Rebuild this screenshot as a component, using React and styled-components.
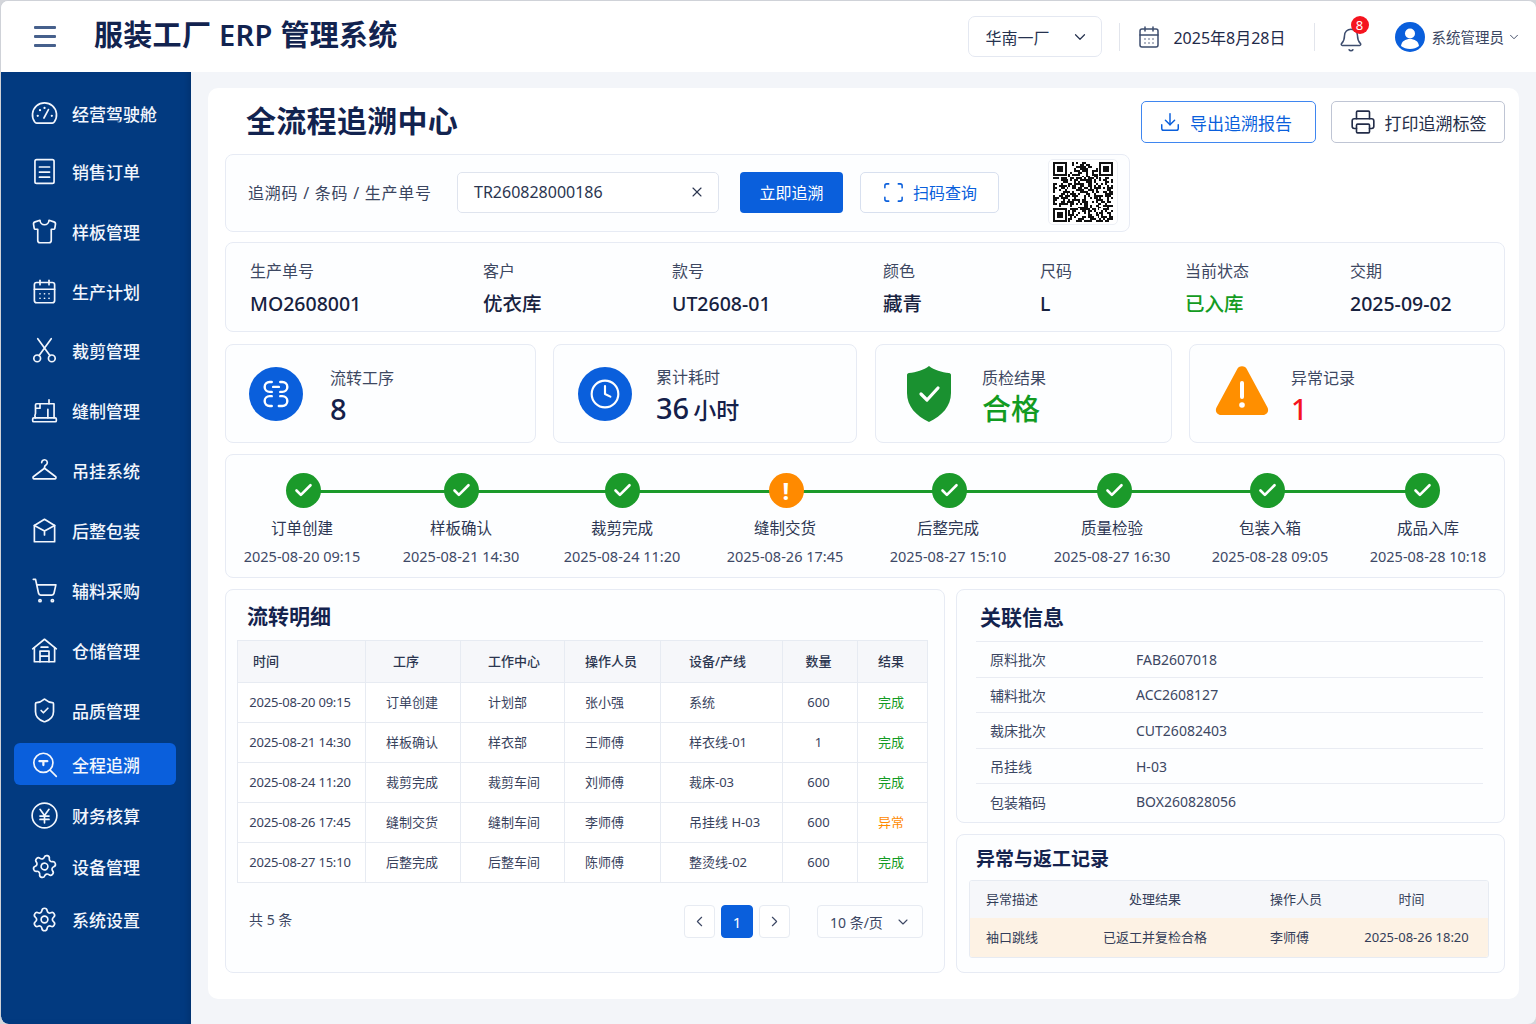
import React from 'react';
import styled, { createGlobalStyle } from 'styled-components';
import {
  Bell, CalendarDays, Check, ChevronDown, ChevronLeft, ChevronRight, Clock, Download,
  Printer, Scan, Settings, ShieldCheck, Shirt, ShoppingCart, X,
} from 'lucide-react';

const GlobalStyle = createGlobalStyle`
  html, body { margin: 0; padding: 0; background: #d4d6db; }
  * { box-sizing: border-box; }
  body { font-family: "Noto Sans", "Noto Sans CJK SC", sans-serif; color: #1c2747; }
`;

const Shell = styled.div`
  width: 1536px;
  height: 1024px;
  display: flex;
  flex-direction: column;
  overflow: hidden;
  border-radius: 8px;
  border: 1px solid #cfd2d8;
  border-bottom: 0;
  border-right: 0;
  background: #f3f5f9;
`;

const TopBar = styled.header`
  height: 71px;
  flex: none;
  display: flex;
  align-items: center;
  background: #fff;
  padding: 0 15px 0 33px;
`;

const Burger = styled.div`
  width: 22px;
  display: flex;
  flex-direction: column;
  gap: 6px;
  span { height: 3px; border-radius: 1px; background: #46608c; }
`;

const AppTitle = styled.h1`
  margin: 0 0 4px 38px;
  font-size: 29px;
  line-height: 40px;
  font-weight: 600;
  letter-spacing: 0.3px;
  color: #12234f;
  white-space: nowrap;
`;

const TopRight = styled.div`
  margin-left: auto;
  display: flex;
  align-items: center;
`;

const FactorySelect = styled.div`
  width: 134px;
  height: 41px;
  display: flex;
  align-items: center;
  justify-content: space-between;
  padding: 0 12px 0 16px;
  border: 1px solid #e4e8f1;
  border-radius: 7px;
  font-size: 16px;
  color: #26324f;
`;

const Divider = styled.div`
  width: 1px;
  height: 28px;
  background: #e2e5ec;
  margin: ${(p) => p.$margin};
`;

const DateText = styled.span`
  margin-left: 12px;
  font-size: 16px;
  color: #1f2a49;
  white-space: nowrap;
`;

const BellWrap = styled.div`
  position: relative;
  width: 26px;
  height: 28px;
  margin: 9px 31px 0 23px;
  color: #3d4d6e;
`;

const Badge = styled.span`
  position: absolute;
  top: -11px;
  right: -5px;
  width: 18px;
  height: 18px;
  border-radius: 50%;
  background: #f5141f;
  color: #fff;
  font-size: 13px;
  line-height: 18px;
  text-align: center;
`;

const UserName = styled.span`
  margin: 0 3px 0 7px;
  font-size: 14.5px;
  color: #3c4763;
  white-space: nowrap;
`;

const Body = styled.div`
  flex: 1;
  display: flex;
  min-height: 0;
`;

const Sidebar = styled.nav`
  width: 190px;
  flex: none;
  padding: 20px 15px 0 13px;
  background: #023a80;
  box-shadow: inset -6px 0 10px -6px #012c63;
  border-bottom-left-radius: 8px;
`;

const NavItem = styled.div`
  height: 42px;
  margin-top: ${(p) => p.$gap}px;
  padding-left: 17px;
  display: flex;
  align-items: center;
  gap: 14px;
  border-radius: 6px;
  font-size: 17px;
  font-weight: 500;
  color: #f2f6fd;
  background: ${(p) => (p.$active ? '#0a5fdc' : 'transparent')};
  svg { flex: none; }
`;

const DeviceCog = styled(Settings)`
  transform: rotate(15deg);
`;

const Main = styled.main`
  flex: 1;
  padding: 16px 17px 24px 17px;
`;

const Panel = styled.div`
  width: 1311px;
  height: 911px;
  padding: 13px 14px 0 17px;
  background: #fff;
  border-radius: 10px;
  display: flex;
  flex-direction: column;
`;

const TitleRow = styled.div`
  height: 42px;
  display: flex;
  align-items: center;
  gap: 15px;
  margin-bottom: 11px;
`;

const PageTitle = styled.h2`
  margin: 0 auto 6px 21px;
  font-size: 30px;
  font-weight: 700;
  letter-spacing: 0.3px;
  color: #12234f;
`;

const OutlineButton = styled.button`
  height: ${(p) => p.$h || 42}px;
  width: ${(p) => p.$w}px;
  display: flex;
  align-items: center;
  justify-content: center;
  gap: ${(p) => p.$g || 9}px;
  padding: 0 ${(p) => p.$pr || 0}px 0 0;
  background: #fff;
  border: 1px solid ${(p) => p.$border};
  border-radius: 5px;
  color: ${(p) => p.$color};
  font: inherit;
  font-size: ${(p) => p.$size || 17}px;
`;

const Card = styled.section`
  background: #fdfeff;
  border: 1px solid #e7ebf4;
  border-radius: 8px;
`;

const SearchCard = styled(Card)`
  width: 905px;
  height: 78px;
  display: flex;
  align-items: center;
  padding: 0 11px 2px 22px;
  margin-bottom: 10px;
`;

const SearchLabel = styled.span`
  width: 209px;
  font-size: 16px;
  letter-spacing: 0.75px;
  color: #3a4560;
  white-space: pre;
`;

const SearchInput = styled.div`
  width: 262px;
  height: 41px;
  display: flex;
  align-items: center;
  justify-content: space-between;
  padding: 0 13px 0 16px;
  background: #fff;
  border: 1px solid #dfe4ee;
  border-radius: 5px;
  font-size: 16px;
  color: #2b3550;
`;

const PrimaryButton = styled.button`
  width: 103px;
  height: 41px;
  margin: 0 17px 0 21px;
  border: 0;
  border-radius: 4px;
  background: #0a5fdc;
  color: #fff;
  font: inherit;
  font-size: 16px;
`;

const QrBox = styled.div`
  width: 70px;
  height: 66px;
  margin-left: auto;
  display: flex;
  align-items: center;
  justify-content: center;
  background: #fff;
  border: 1px solid #eceff5;
  border-radius: 5px;
`;

const InfoCard = styled(Card)`
  height: 90px;
  display: grid;
  grid-template-columns: 233px 189px 211px 157px 145px 165px 1fr;
  align-items: center;
  padding: 3px 0 0 24px;
  margin-bottom: 12px;
`;

const InfoLabel = styled.div`
  font-size: 16px;
  line-height: 22px;
  color: #3d4862;
  margin-bottom: 8px;
`;

const InfoValue = styled.div`
  font-size: 19.5px;
  line-height: 28px;
  font-weight: 500;
  color: ${(p) => p.$color || '#17223f'};
`;

const StatRow = styled.div`
  display: flex;
  margin-bottom: 11px;
`;

const StatCard = styled(Card)`
  width: ${(p) => p.$w}px;
  height: 99px;
  margin-left: ${(p) => p.$gap}px;
  padding-left: ${(p) => p.$pad}px;
  display: flex;
  align-items: center;
  gap: ${(p) => p.$between}px;
`;

const RoundIcon = styled.div`
  width: 54px;
  height: 54px;
  border-radius: 50%;
  background: #0a5fdc;
  color: #fff;
  display: flex;
  align-items: center;
  justify-content: center;
`;

const StatText = styled.div`
  padding-top: 8px;
`;

const StatLabel = styled.div`
  font-size: 16px;
  line-height: 22px;
  color: #3d4862;
`;

const StatValue = styled.div`
  margin-top: 1px;
  font-size: 29px;
  line-height: 38px;
  font-weight: 500;
  color: ${(p) => p.$color || '#14204a'};
`;

const StatUnit = styled.span`
  margin-left: 4px;
  font-size: 23px;
`;

const WarnSvg = styled.svg`
  margin-bottom: 5px;
`;

const TimelineCard = styled(Card)`
  height: 124px;
  padding: 18px 0 0 16px;
  margin-bottom: 11px;
`;

const Track = styled.div`
  position: relative;
  display: flex;
`;

const TrackLine = styled.div`
  position: absolute;
  top: 17px;
  left: 62px;
  width: 1119px;
  height: 3px;
  background: #1b9a2a;
`;

const Step = styled.div`
  position: relative;
  width: 120px;
  margin-left: ${(p) => p.$gap}px;
  display: flex;
  flex-direction: column;
  align-items: center;
  white-space: nowrap;
`;

const StepDot = styled.div`
  width: 35px;
  height: 35px;
  margin-left: ${(p) => p.$nudge * 2}px;
  border-radius: 50%;
  background: ${(p) => p.$color};
  color: #fff;
  display: flex;
  align-items: center;
  justify-content: center;
  font-size: 24px;
  font-weight: 700;
`;

const StepName = styled.div`
  margin-top: 9px;
  font-size: 15.5px;
  line-height: 22px;
  color: #2d3753;
`;

const StepTime = styled.div`
  margin-top: 7px;
  font-size: 14.5px;
  line-height: 20px;
  color: #3e4966;
`;

const Columns = styled.div`
  display: flex;
  gap: 11px;
`;

const FlowCard = styled(Card)`
  width: 720px;
  height: 384px;
  padding: 0 11px;
`;

const SectionTitle = styled.h3`
  margin: 0;
  padding-left: ${(p) => p.$pad}px;
  height: ${(p) => p.$h}px;
  display: flex;
  align-items: center;
  font-size: ${(p) => p.$size || 21}px;
  font-weight: 700;
  color: #14234e;
`;

const FlowTable = styled.table`
  width: 690px;
  border-collapse: collapse;
  table-layout: fixed;
  font-size: 13px;
  color: #38425d;
  th, td {
    border: 1px solid #e7ebf2;
    padding: 0;
    white-space: nowrap;
  }
  th { height: 42px; background: #f6f7fa; font-weight: 500; color: #2c3650; }
  td { height: 40px; background: #fff; }
  td:first-child div { letter-spacing: -0.2px; }
`;

const Cell = styled.div`
  text-align: ${(p) => (p.$pad ? 'left' : 'center')};
  padding: 0 ${(p) => p.$right || 0}px 2px ${(p) => p.$pad || 0}px;
  color: ${(p) => p.$color || 'inherit'};
`;

const Pager = styled.div`
  margin-top: 22px;
  display: flex;
  align-items: center;
  gap: 6px;
  padding-right: 10px;
`;

const Total = styled.span`
  margin: -6px auto 0 12px;
  font-size: 14px;
  color: #3c4763;
`;

const PageBtn = styled.div`
  width: ${(p) => (p.$active ? 32 : 31)}px;
  height: 33px;
  display: flex;
  align-items: center;
  justify-content: center;
  border-radius: 4px;
  border: 1px solid ${(p) => (p.$active ? '#0a5fdc' : '#e7ebf2')};
  background: ${(p) => (p.$active ? '#0a5fdc' : '#fff')};
  color: ${(p) => (p.$active ? '#fff' : '#3c4763')};
  font-size: 15px;
`;

const PageSize = styled.div`
  width: 106px;
  height: 33px;
  margin-left: 21px;
  display: flex;
  align-items: center;
  justify-content: space-between;
  padding: 0 11px 0 12px;
  border: 1px solid #e7ebf2;
  border-radius: 4px;
  font-size: 14px;
  color: #3c4763;
`;

const RightCol = styled.div`
  width: 549px;
  display: flex;
  flex-direction: column;
  gap: 11px;
`;

const LinkCard = styled(Card)`
  height: 234px;
  padding: 0 21px 0 19px;
`;

const LinkRow = styled.div`
  height: 35.6px;
  display: grid;
  grid-template-columns: 146px 1fr;
  align-items: center;
  padding-left: 14px;
  border-top: 1px solid #e9ecf3;
  font-size: 14px;
  color: #3c4763;
`;

const IssueCard = styled(Card)`
  height: 139px;
  padding: 0 15px 0 12px;
`;

const IssueGrid = styled.div`
  border: 1px solid #e7ebf2;
  border-radius: 3px;
  overflow: hidden;
`;

const IssueRow = styled.div`
  display: grid;
  grid-template-columns: 110px 150px 115px 1fr;
  align-items: center;
  height: ${(p) => p.$h}px;
  font-size: 13px;
  white-space: nowrap;
  color: #333d58;
  background: ${(p) => p.$bg};
`;

const navItems = [
  ['经营驾驶舱', 'gauge', 0],
  ['销售订单', 'order', 16],
  ['样板管理', 'shirt', 18],
  ['生产计划', 'calendar', 18],
  ['裁剪管理', 'scissors', 17],
  ['缝制管理', 'sewing', 18],
  ['吊挂系统', 'hanger', 18],
  ['后整包装', 'box', 18],
  ['辅料采购', 'cart', 18],
  ['仓储管理', 'house', 18],
  ['品质管理', 'shield', 18],
  ['全程追溯', 'trace', 12],
  ['财务核算', 'yen', 9],
  ['设备管理', 'device', 9],
  ['系统设置', 'settings', 11],
];

const infoItems = [
  ['生产单号', 'MO2608001'],
  ['客户', '优衣库'],
  ['款号', 'UT2608-01'],
  ['颜色', '藏青'],
  ['尺码', 'L'],
  ['当前状态', '已入库', '#129b22'],
  ['交期', '2025-09-02'],
];

const steps = [
  ['订单创建', '2025-08-20 09:15', 0, 1],
  ['样板确认', '2025-08-21 14:30', 39, 0],
  ['裁剪完成', '2025-08-24 11:20', 41, 0],
  ['缝制交货', '2025-08-26 17:45', 43, 1],
  ['后整完成', '2025-08-27 15:10', 43, 1],
  ['质量检验', '2025-08-27 16:30', 44, 2],
  ['包装入箱', '2025-08-28 09:05', 38, -3],
  ['成品入库', '2025-08-28 10:18', 38, -6],
];

const flowCols = [
  { title: '时间', w: 128, headPad: 15, right: 3 },
  { title: '工序', w: 95, headPad: 27, right: 2 },
  { title: '工作中心', w: 104, pad: 27 },
  { title: '操作人员', w: 96, pad: 20 },
  { title: '设备/产线', w: 122, pad: 28 },
  { title: '数量', w: 75, right: 3 },
  { title: '结果', w: 70, right: 3 },
];

const flowRows = [
  ['2025-08-20 09:15', '订单创建', '计划部', '张小强', '系统', '600', '完成'],
  ['2025-08-21 14:30', '样板确认', '样衣部', '王师傅', '样衣线-01', '1', '完成'],
  ['2025-08-24 11:20', '裁剪完成', '裁剪车间', '刘师傅', '裁床-03', '600', '完成'],
  ['2025-08-26 17:45', '缝制交货', '缝制车间', '李师傅', '吊挂线 H-03', '600', '异常'],
  ['2025-08-27 15:10', '后整完成', '后整车间', '陈师傅', '整烫线-02', '600', '完成'],
];

const links = [
  ['原料批次', 'FAB2607018'],
  ['辅料批次', 'ACC2608127'],
  ['裁床批次', 'CUT26082403'],
  ['吊挂线', 'H-03'],
  ['包装箱码', 'BOX260828056'],
];

function Line({ size = 27, width = 1.5, children }) {
  return (
    <svg width={size} height={size} viewBox="0 0 24 24" fill="none" stroke="currentColor" strokeWidth={width} strokeLinecap="round" strokeLinejoin="round">
      {children}
    </svg>
  );
}

function NavIcon({ name }) {
  switch (name) {
    case 'gauge':
      return (
        <Line>
          <path d="M5 20.5h14a2 2 0 0 0 1.7-1A10.7 10.7 0 1 0 3.3 19.5a2 2 0 0 0 1.7 1z" />
          <path d="M11.5 16l4-7.5" />
          <path d="M6 14h.01M8 9h.01M12 7h.01M18.5 14h.01" strokeWidth="2" />
        </Line>
      );
    case 'order':
      return (
        <Line>
          <rect x="3.5" y="1.5" width="17" height="21" rx="1.5" />
          <path d="M7.5 8h9M7.5 12.5h9M7.5 17h9" />
        </Line>
      );
    case 'shirt':
      return <Shirt size={27} strokeWidth={1.5} />;
    case 'calendar':
      return <CalendarDays size={27} strokeWidth={1.5} />;
    case 'scissors':
      return (
        <Line>
          <circle cx="5.5" cy="19" r="3" />
          <circle cx="18.5" cy="19" r="3" />
          <path d="M7.2 16.5L18 1.5M16.8 16.5L6 1.5" />
        </Line>
      );
    case 'sewing':
      return (
        <Line>
          <rect x="1.5" y="18.5" width="21" height="3.5" rx="1" />
          <path d="M4 18.5c-1-1.5-.5-3 0-4V7a1 1 0 0 1 1-1h15.5v12.5" />
          <path d="M16 6V2.5M8 6v4H4.5M15 18.5V11" />
        </Line>
      );
    case 'hanger':
      return (
        <Line>
          <path d="M9.5 5a2.5 2.5 0 1 1 3.8 2.1c-.8.5-1.3 1-1.3 2V10" />
          <path d="M12 10L2.3 17.3a1.2 1.2 0 0 0 .7 2.2h18a1.2 1.2 0 0 0 .7-2.2z" />
        </Line>
      );
    case 'box':
      return (
        <Line>
          <path d="M3 7.5L12 2l9 5.5V22H3z" />
          <path d="M3 7.5l9 5 9-5M12 12.5V16" />
        </Line>
      );
    case 'cart':
      return <ShoppingCart size={27} strokeWidth={1.5} />;
    case 'house':
      return (
        <Line>
          <path d="M1.5 10.5L12 2l10.5 8.5" />
          <path d="M3 9.5V22h18V9.5" />
          <path d="M8 22v-9.5h8V22M8 17h8M9 9h6" />
        </Line>
      );
    case 'shield':
      return <ShieldCheck size={27} strokeWidth={1.5} />;
    case 'trace':
      return (
        <Line>
          <circle cx="11" cy="10.5" r="8.5" />
          <path d="M17 17l5.5 5.5" />
          <path d="M7.5 9h7M11 9v3.5" strokeWidth="2" />
        </Line>
      );
    case 'yen':
      return (
        <Line>
          <circle cx="12" cy="12" r="11" />
          <path d="M8 6.5l4 5.5 4-5.5M12 12v6.5M8 12.5h8M8 15.5h8" />
        </Line>
      );
    case 'device':
      return <DeviceCog size={27} strokeWidth={1.5} />;
    default:
      return <Settings size={27} strokeWidth={1.5} />;
  }
}

function FlowIcon() {
  return (
    <Line size={34} width={1.7}>
      <path d="M9 3.5H7.5a3.5 3.5 0 0 0 0 7H9M15 3.5h1.5a3.5 3.5 0 0 1 0 7H15M10 7h4" />
      <path d="M9 13.5H7.5a3.5 3.5 0 0 0 0 7H9M15 13.5h1.5a3.5 3.5 0 0 1 0 7H14" />
    </Line>
  );
}

function ShieldBadge() {
  return (
    <svg width="44" height="56" viewBox="0 0 44 56">
      <path d="M22 0c5 4 13 6.5 20 7 1.2 0 2 1 2 2v18c0 13-9 23-22 29C9 50 0 40 0 27V9c0-1 .8-2 2-2 7-.5 15-3 20-7z" fill="#1a9130" />
      <path d="M14 28l6 6 11-12" fill="none" stroke="#fff" strokeWidth="3.2" strokeLinecap="round" strokeLinejoin="round" />
    </svg>
  );
}

function WarnBadge() {
  return (
    <WarnSvg width="54" height="50" viewBox="0 0 54 50">
      <path d="M22 3.5a5.5 5.5 0 0 1 10 0l20.5 38c1.8 3.5-.5 7.5-4.5 7.5H6c-4 0-6.3-4-4.5-7.5z" fill="#ff8f00" />
      <rect x="25" y="15" width="4" height="18" rx="2" fill="#fff" />
      <circle cx="27" cy="39" r="2.8" fill="#fff" />
    </WarnSvg>
  );
}

function Avatar() {
  return (
    <svg width="30" height="30" viewBox="0 0 30 30">
      <circle cx="15" cy="15" r="15" fill="#0a5fdc" />
      <circle cx="15" cy="11.5" r="5" fill="#fff" />
      <path d="M6 24c.6-5 4.5-7 9-7s8.4 2 9 7c-2.5 2-5.5 3-9 3s-6.500-1-9-3z" fill="#fff" />
    </svg>
  );
}

// 二维码只是示意，用固定种子生成
function QrCode() {
  const n = 31;
  const cells = [];
  let seed = 186;
  const inFinder = (x, y) => (x < 8 && y < 8) || (x >= n - 8 && y < 8) || (x < 8 && y >= n - 8);
  for (let y = 0; y < n; y++) {
    for (let x = 0; x < n; x++) {
      seed = (seed * 1103515245 + 12345) & 0x7fffffff;
      if (!inFinder(x, y) && (seed >> 16) % 100 < 52) cells.push(`M${x} ${y}h1v1h-1z`);
    }
  }
  const finder = (x, y) => `M${x} ${y}h7v7h-7zM${x + 1} ${y + 1}v5h5v-5zM${x + 2} ${y + 2}h3v3h-3z`;
  return (
    <svg width="60" height="60" viewBox="0 0 31 31" shapeRendering="crispEdges">
      <path d={cells.join('')} fill="#111" />
      <path d={finder(0, 0) + finder(24, 0) + finder(0, 24)} fill="#111" fillRule="evenodd" />
    </svg>
  );
}

function App() {
  return (
    <>
      <GlobalStyle />
      <Shell>
        <TopBar>
          <Burger><span /><span /><span /></Burger>
          <AppTitle>服装工厂 ERP 管理系统</AppTitle>
          <TopRight>
            <FactorySelect>华南一厂<ChevronDown size={18} strokeWidth={1.6} /></FactorySelect>
            <Divider $margin="0 17px 0 17px" />
            <CalendarDays size={24} strokeWidth={1.5} color="#3d4d6e" />
            <DateText>2025年8月28日</DateText>
            <Divider $margin="0 0 0 28px" />
            <BellWrap>
              <Bell size={26} strokeWidth={1.4} />
              <Badge>8</Badge>
            </BellWrap>
            <Avatar />
            <UserName>系统管理员</UserName>
            <ChevronDown size={14} strokeWidth={1.6} color="#3c4763" />
          </TopRight>
        </TopBar>
        <Body>
          <Sidebar>
            {navItems.map(([label, icon, gap]) => (
              <NavItem key={label} $gap={gap} $active={label === '全程追溯'}>
                <NavIcon name={icon} />
                {label}
              </NavItem>
            ))}
          </Sidebar>
          <Main>
            <Panel>
              <TitleRow>
                <PageTitle>全流程追溯中心</PageTitle>
                <OutlineButton $w={175} $pr={6} $border="#3f86f0" $color="#0a5fdc">
                  <Download size={22} strokeWidth={1.6} />导出追溯报告
                </OutlineButton>
                <OutlineButton $w={174} $border="#bfc5d4" $color="#232d49">
                  <Printer size={26} strokeWidth={1.5} />打印追溯标签
                </OutlineButton>
              </TitleRow>
              <SearchCard>
                <SearchLabel>追溯码 / 条码 / 生产单号</SearchLabel>
                <SearchInput>TR260828000186<X size={16} strokeWidth={1.6} /></SearchInput>
                <PrimaryButton>立即追溯</PrimaryButton>
                <OutlineButton $w={139} $h={41} $g={8} $size={16} $border="#d8e0ef" $color="#0a5fdc">
                  <Scan size={23} strokeWidth={1.6} />扫码查询
                </OutlineButton>
                <QrBox><QrCode /></QrBox>
              </SearchCard>
              <InfoCard>
                {infoItems.map(([label, value, color]) => (
                  <div key={label}>
                    <InfoLabel>{label}</InfoLabel>
                    <InfoValue $color={color}>{value}</InfoValue>
                  </div>
                ))}
              </InfoCard>
              <StatRow>
                <StatCard $w={311} $gap={0} $pad={23} $between={27}>
                  <RoundIcon><FlowIcon /></RoundIcon>
                  <StatText><StatLabel>流转工序</StatLabel><StatValue>8</StatValue></StatText>
                </StatCard>
                <StatCard $w={304} $gap={17} $pad={24} $between={24}>
                  <RoundIcon><Clock size={32} strokeWidth={1.6} /></RoundIcon>
                  <StatText><StatLabel>累计耗时</StatLabel><StatValue>36<StatUnit>小时</StatUnit></StatValue></StatText>
                </StatCard>
                <StatCard $w={297} $gap={18} $pad={31} $between={31}>
                  <ShieldBadge />
                  <StatText><StatLabel>质检结果</StatLabel><StatValue $color="#129b22">合格</StatValue></StatText>
                </StatCard>
                <StatCard $w={316} $gap={17} $pad={25} $between={22}>
                  <WarnBadge />
                  <StatText><StatLabel>异常记录</StatLabel><StatValue $color="#f5141f">1</StatValue></StatText>
                </StatCard>
              </StatRow>
              <TimelineCard>
                <Track>
                  <TrackLine />
                  {steps.map(([name, time, gap, nudge]) => {
                    const warn = name === '缝制交货';
                    return (
                      <Step key={name} $gap={gap}>
                        <StepDot $nudge={nudge} $color={warn ? '#ff8a00' : '#1b9a2a'}>
                          {warn ? '!' : <Check size={21} strokeWidth={3} />}
                        </StepDot>
                        <StepName>{name}</StepName>
                        <StepTime>{time}</StepTime>
                      </Step>
                    );
                  })}
                </Track>
              </TimelineCard>
              <Columns>
                <FlowCard>
                  <SectionTitle $pad={10} $h={50}>流转明细</SectionTitle>
                  <FlowTable>
                    <colgroup>
                      {flowCols.map((c) => <col key={c.title} width={c.w} />)}
                    </colgroup>
                    <thead>
                      <tr>
                        {flowCols.map((c) => (
                          <th key={c.title}><Cell $pad={c.headPad || c.pad} $right={c.right}>{c.title}</Cell></th>
                        ))}
                      </tr>
                    </thead>
                    <tbody>
                      {flowRows.map((row) => (
                        <tr key={row[0]}>
                          {row.map((text, i) => (
                            <td key={i}>
                              <Cell
                                $pad={flowCols[i].pad}
                                $right={flowCols[i].right}
                                $color={i === 6 ? (text === '异常' ? '#ff8a00' : '#129b22') : undefined}
                              >
                                {text}
                              </Cell>
                            </td>
                          ))}
                        </tr>
                      ))}
                    </tbody>
                  </FlowTable>
                  <Pager>
                    <Total>共 5 条</Total>
                    <PageBtn><ChevronLeft size={17} strokeWidth={1.6} /></PageBtn>
                    <PageBtn $active>1</PageBtn>
                    <PageBtn><ChevronRight size={17} strokeWidth={1.6} /></PageBtn>
                    <PageSize>10 条/页<ChevronDown size={16} strokeWidth={1.6} /></PageSize>
                  </Pager>
                </FlowCard>
                <RightCol>
                  <LinkCard>
                    <SectionTitle $pad={4} $h={51}>关联信息</SectionTitle>
                    {links.map(([label, value]) => (
                      <LinkRow key={label}><span>{label}</span><span>{value}</span></LinkRow>
                    ))}
                  </LinkCard>
                  <IssueCard>
                    <SectionTitle $pad={7} $h={45} $size={19}>异常与返工记录</SectionTitle>
                    <IssueGrid>
                      <IssueRow $h={37} $bg="#f6f7fa">
                        <Cell $pad={16}>异常描述</Cell>
                        <Cell>处理结果</Cell>
                        <Cell $pad={40}>操作人员</Cell>
                        <Cell $right={10}>时间</Cell>
                      </IssueRow>
                      <IssueRow $h={39} $bg="#fdf2e4">
                        <Cell $pad={16}>袖口跳线</Cell>
                        <Cell>已返工并复检合格</Cell>
                        <Cell $pad={40}>李师傅</Cell>
                        <Cell>2025-08-26 18:20</Cell>
                      </IssueRow>
                    </IssueGrid>
                  </IssueCard>
                </RightCol>
              </Columns>
            </Panel>
          </Main>
        </Body>
      </Shell>
    </>
  );
}

export default App;
